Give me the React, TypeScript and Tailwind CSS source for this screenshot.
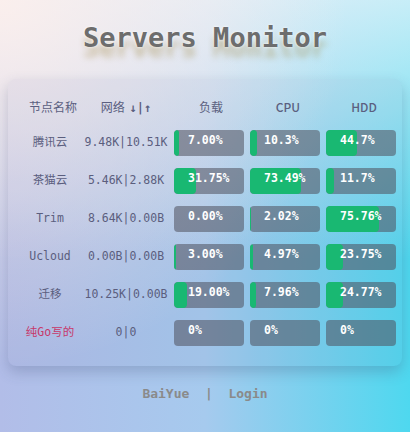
import React from "react";

type Server = {
    name: string;
    net: string;
    load: number;
    loadText: string;
    cpu: number;
    cpuText: string;
    hdd: number;
    hddText: string;
    offline?: boolean;
};

const servers: Server[] = [
    { name: "腾讯云", net: "9.48K|10.51K", load: 7, loadText: "7.00%", cpu: 10.3, cpuText: "10.3%", hdd: 44.7, hddText: "44.7%" },
    { name: "茶猫云", net: "5.46K|2.88K", load: 31.75, loadText: "31.75%", cpu: 73.49, cpuText: "73.49%", hdd: 11.7, hddText: "11.7%" },
    { name: "Trim", net: "8.64K|0.00B", load: 0, loadText: "0.00%", cpu: 2.02, cpuText: "2.02%", hdd: 75.76, hddText: "75.76%" },
    { name: "Ucloud", net: "0.00B|0.00B", load: 3, loadText: "3.00%", cpu: 4.97, cpuText: "4.97%", hdd: 23.75, hddText: "23.75%" },
    { name: "迁移", net: "10.25K|0.00B", load: 19, loadText: "19.00%", cpu: 7.96, cpuText: "7.96%", hdd: 24.77, hddText: "24.77%" },
    { name: "纯Go写的", net: "0|0", load: 0, loadText: "0%", cpu: 0, cpuText: "0%", hdd: 0, hddText: "0%", offline: true },
];

const mono = "font-['DejaVu_Sans_Mono','Noto_Sans_CJK_SC',monospace]";

// one progress bar cell
const Bar = ({ value, text }: { value: number; text: string }) => (
    <div className="relative w-[70px] h-[26px] rounded-[4px] bg-[rgba(78,80,92,0.55)] overflow-hidden">
        <div
            className="absolute left-0 top-0 h-full rounded-[4px] bg-[#19b872]"
            style={{ width: `${value}%` }}
        />
        <div className={`relative pl-[14px] pt-[3px] text-[11.5px] leading-[14px] font-bold text-white ${mono}`}>
            {text}
        </div>
    </div>
);

export default function App() {
    return (
        <div className="min-h-[432px] w-full flex flex-col items-center bg-[radial-gradient(ellipse_at_top_left,rgba(255,240,235,0.85)_0%,rgba(255,240,235,0)_60%),linear-gradient(to_bottom,rgba(240,245,250,0.75)_0%,rgba(240,245,250,0)_60%),linear-gradient(to_right,#b2bde8_0%,#a6caee_50%,#4ed8ef_100%)]">
            {/* Title */}
            <h1
                className={`pt-[22px] text-[27px] leading-[32px] font-bold text-[#6d6d6d] ${mono} [text-shadow:0_0_3px_#ffffff,0_10px_6px_rgba(150,125,50,0.4)]`}
            >
                Servers Monitor
            </h1>

            {/* Card */}
            <div className="mt-[25px] ml-[8px] mr-[8px] self-stretch rounded-[8px] bg-[rgba(120,120,160,0.08)] shadow-[0_6px_14px_rgba(60,70,110,0.25)] pl-[6px] pt-[16px] pb-[14px]">
                <div className="grid grid-cols-[70px_90px_76px_76px_76px] h-[24px] items-center text-[12px] text-[#5b5f80] font-['Noto_Sans_CJK_SC',sans-serif]">
                    <div className="text-center pl-[8px]">节点名称</div>
                    <div className="text-center pr-[6px]">
                        网络 <span className={`ml-[2px] font-bold text-[12px] ${mono}`}>↓|↑</span>
                    </div>
                    <div className="text-center pr-[2px]">负载</div>
                    <div className="text-center font-medium">CPU</div>
                    <div className="text-center font-medium">HDD</div>
                </div>

                <div className="mt-[5px] flex flex-col">
                    {servers.map((s) => (
                        <div
                            key={s.name}
                            className={`grid grid-cols-[70px_90px_76px_76px_76px] h-[38px] items-center text-[11.5px] ${mono}`}
                        >
                            <div className={`text-center pl-[2px] ${s.offline ? "text-[#c7386a]" : "text-[#5b5e7e]"}`}>
                                {s.name}
                            </div>
                            <div className="text-center pr-[6px] text-[#5b5e7e]">{s.net}</div>
                            <Bar value={s.load} text={s.loadText} />
                            <Bar value={s.cpu} text={s.cpuText} />
                            <Bar value={s.hdd} text={s.hddText} />
                        </div>
                    ))}
                </div>
            </div>

            {/* Footer */}
            <div className={`mt-[19px] text-[13px] leading-[18px] font-bold text-[#8a8a8a] whitespace-pre ${mono}`}>
                {"BaiYue  |  Login"}
            </div>
        </div>
    );
}
